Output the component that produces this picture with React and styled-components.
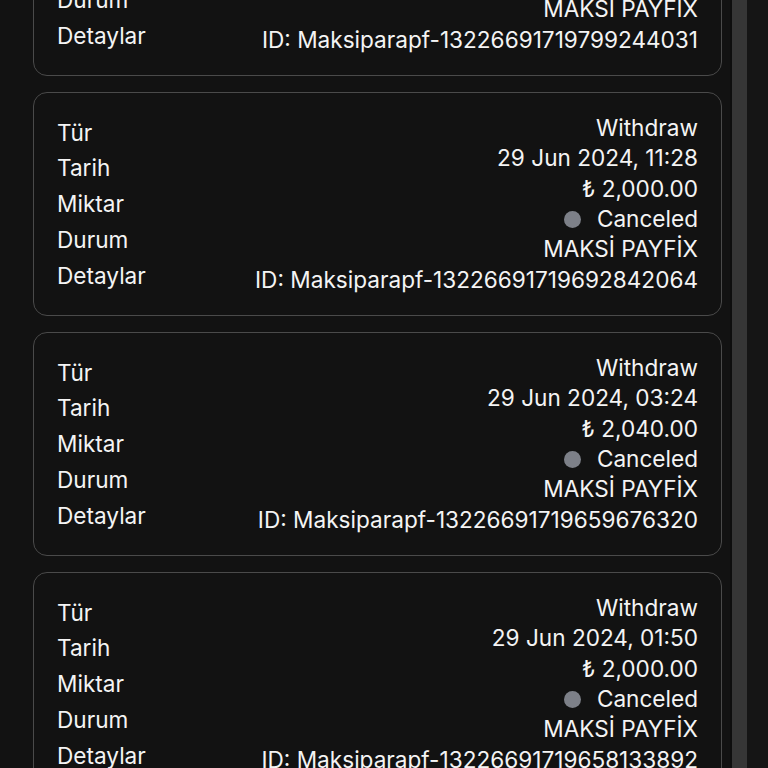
import React from 'react';
import styled, { createGlobalStyle } from 'styled-components';

const GlobalStyle = createGlobalStyle`
  html, body {
    margin: 0;
    padding: 0;
    background: #121212;
    overflow: hidden;
  }
  body {
    font-family: Inter, 'Noto Sans', 'DejaVu Sans', sans-serif;
    color: #ffffff;
  }
`;

const Screen = styled.div`
  display: flex;
  width: 768px;
  height: 768px;
  overflow: hidden;
  background: #121212;
`;

const Content = styled.div`
  flex: 1;
  overflow: hidden;
`;

const List = styled.div`
  display: flex;
  flex-direction: column;
  gap: 16px;
  padding: 0 8px 0 33px;
  margin-top: -148px;
`;

const Card = styled.div`
  display: flex;
  justify-content: space-between;
  align-items: center;
  height: 224px;
  box-sizing: border-box;
  padding: 20px 23px;
  border: 1px solid #4a4a4a;
  border-radius: 14px;
  background: #121212;
`;

const Labels = styled.div`
  display: flex;
  flex-direction: column;
  font-size: 22.6px;
  line-height: 35.7px;
  color: #f4f4f4;
`;

const Values = styled.div`
  display: flex;
  flex-direction: column;
  align-items: flex-end;
  font-size: 22.6px;
  line-height: 30.3px;
  color: #f4f4f4;
  text-align: right;
  white-space: nowrap;
`;

const Status = styled.div`
  display: flex;
  align-items: center;
  gap: 16px;
`;

const Dot = styled.span`
  width: 17px;
  height: 17px;
  border-radius: 50%;
  background: ${(p) => p.color};
`;

const ScrollTrack = styled.div`
  width: 38px;
  height: 100%;
  display: flex;
  background: #151515;
  border-left: 2px solid #0e0e0e;
  box-sizing: border-box;
`;

const ScrollThumb = styled.div`
  width: 15px;
  height: 100%;
  background: #363636;
`;

const rows = [
  { date: '29 Jun 2024, 12:10', amount: '₺ 2,000.00', method: 'MAKSI PAYFIX', id: 'Maksiparapf-13226691719799244031' },
  { date: '29 Jun 2024, 11:28', amount: '₺ 2,000.00', method: 'MAKSİ PAYFİX', id: 'Maksiparapf-13226691719692842064' },
  { date: '29 Jun 2024, 03:24', amount: '₺ 2,040.00', method: 'MAKSİ PAYFİX', id: 'Maksiparapf-13226691719659676320' },
  { date: '29 Jun 2024, 01:50', amount: '₺ 2,000.00', method: 'MAKSİ PAYFİX', id: 'Maksiparapf-13226691719658133892' },
];

const TransactionCard = ({ row }) => (
  <Card>
    <Labels>
      <span>Tür</span>
      <span>Tarih</span>
      <span>Miktar</span>
      <span>Durum</span>
      <span>Detaylar</span>
    </Labels>
    <Values>
      <span>Withdraw</span>
      <span>{row.date}</span>
      <span>{row.amount}</span>
      <Status>
        <Dot color="#7d8088" />
        <span>Canceled</span>
      </Status>
      <span>{row.method}</span>
      <span>ID: {row.id}</span>
    </Values>
  </Card>
);

const App = () => {
  return (
    <Screen>
      <GlobalStyle />
      <Content>
        <List>
          {rows.map((row) => (
            <TransactionCard key={row.id} row={row} />
          ))}
        </List>
      </Content>
      <ScrollTrack>
        <ScrollThumb />
      </ScrollTrack>
    </Screen>
  );
};

export default App;
